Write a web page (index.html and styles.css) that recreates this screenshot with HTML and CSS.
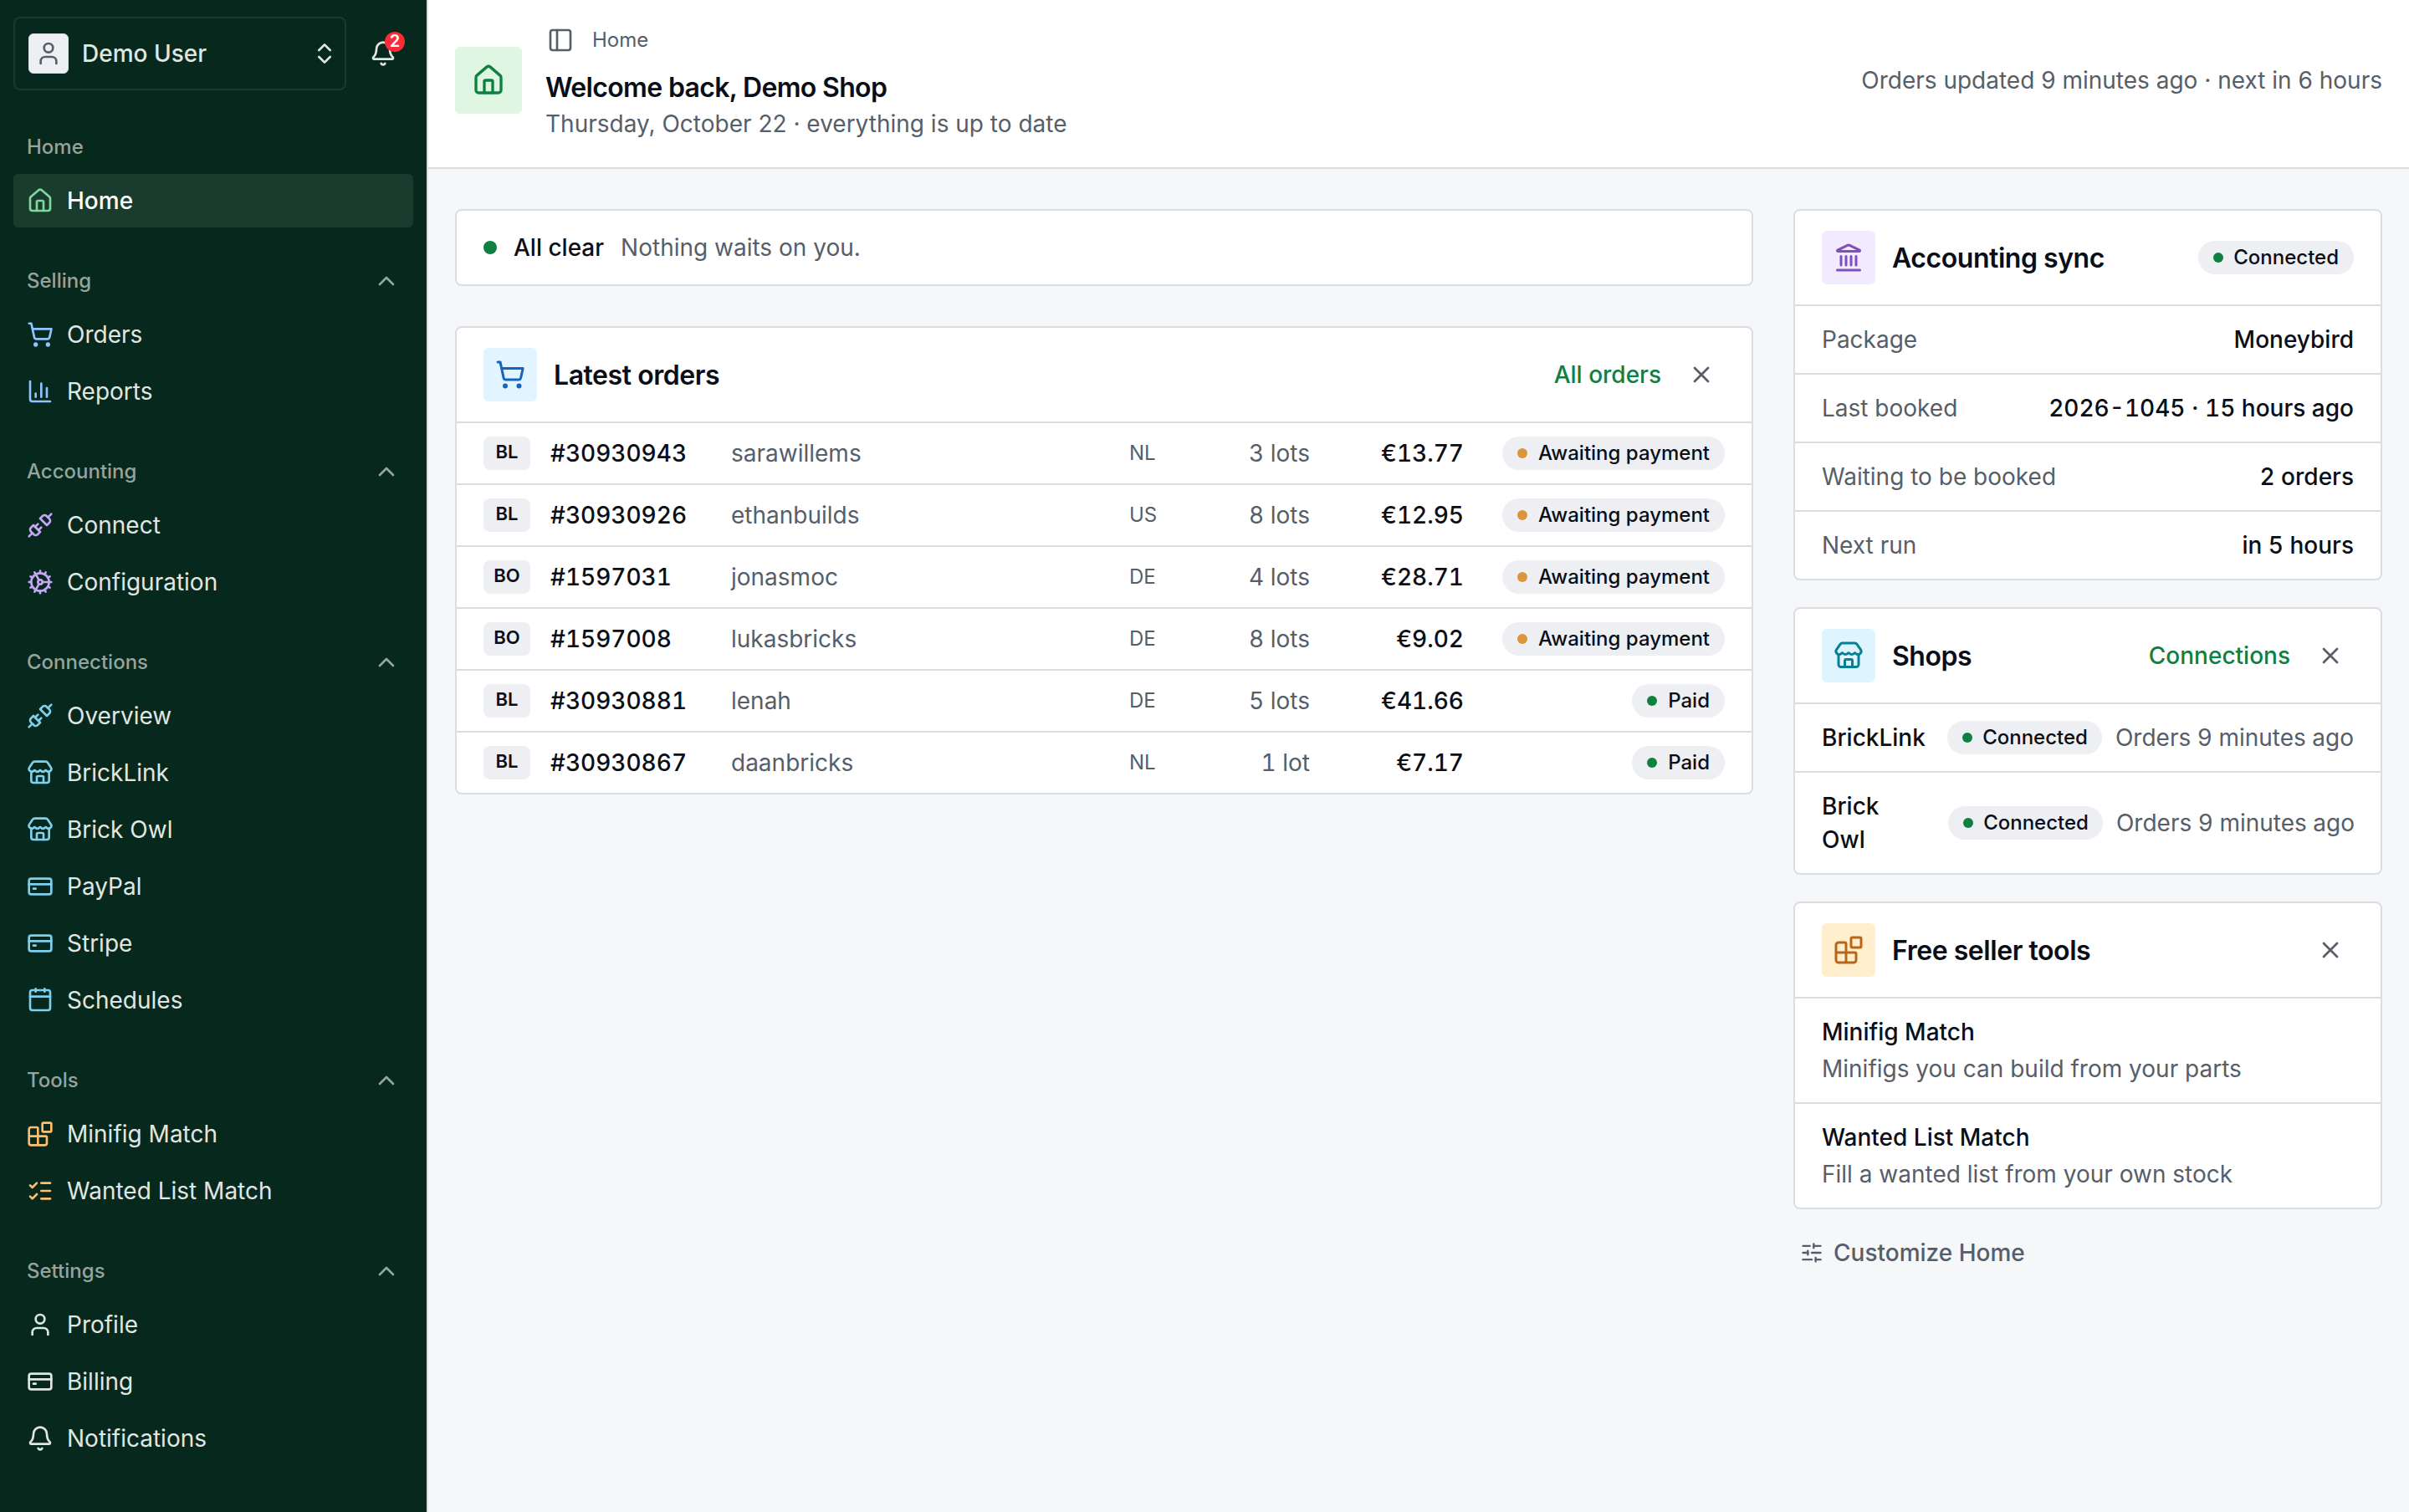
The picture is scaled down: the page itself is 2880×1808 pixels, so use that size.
FILE: index.html
```html
<!DOCTYPE html>
<html lang="en">
<head>
<meta charset="utf-8">
<title>Home</title>
<link rel="stylesheet" href="styles.css">
</head>
<body>
<svg class="sprite" aria-hidden="true">
  <symbol id="i-user" viewBox="0 0 24 24"><path d="M19 21v-2a4 4 0 0 0-4-4H9a4 4 0 0 0-4 4v2"/><circle cx="12" cy="7" r="4"/></symbol>
  <symbol id="i-updown" viewBox="0 0 24 24"><path d="m7 15 5 5 5-5"/><path d="m7 9 5-5 5 5"/></symbol>
  <symbol id="i-bell" viewBox="0 0 24 24"><path d="M10.268 21a2 2 0 0 0 3.464 0"/><path d="M3.262 15.326A1 1 0 0 0 4 17h16a1 1 0 0 0 .74-1.673C19.41 13.956 18 12.499 18 8A6 6 0 0 0 6 8c0 4.499-1.411 5.956-2.738 7.326"/></symbol>
  <symbol id="i-home" viewBox="0 0 24 24"><path d="M15 21v-8a1 1 0 0 0-1-1h-4a1 1 0 0 0-1 1v8"/><path d="M3 10a2 2 0 0 1 .709-1.528l7-5.999a2 2 0 0 1 2.582 0l7 5.999A2 2 0 0 1 21 10v9a2 2 0 0 1-2 2H5a2 2 0 0 1-2-2z"/></symbol>
  <symbol id="i-up" viewBox="0 0 24 24"><path d="m18 15-6-6-6 6"/></symbol>
  <symbol id="i-cart" viewBox="0 0 24 24"><circle cx="8" cy="21" r="1"/><circle cx="19" cy="21" r="1"/><path d="M2.05 2.05h2l2.66 12.42a2 2 0 0 0 2 1.58h9.78a2 2 0 0 0 1.95-1.57l1.65-7.43H5.12"/></symbol>
  <symbol id="i-chart" viewBox="0 0 24 24"><path d="M3 3v16a2 2 0 0 0 2 2h16"/><path d="M18 17V9"/><path d="M13 17V5"/><path d="M8 17v-3"/></symbol>
  <symbol id="i-unplug" viewBox="0 0 24 24"><path d="m19 5 3-3"/><path d="m2 22 3-3"/><path d="M6.3 20.3a2.4 2.4 0 0 0 3.4 0L12 18l-6-6-2.3 2.3a2.4 2.4 0 0 0 0 3.4Z"/><path d="M7.5 13.5 10 11"/><path d="M10.5 16.5 13 14"/><path d="m12 6 6 6 2.3-2.3a2.4 2.4 0 0 0 0-3.4l-2.6-2.6a2.4 2.4 0 0 0-3.4 0Z"/></symbol>
  <symbol id="i-cog" viewBox="0 0 24 24"><path d="M12 20a8 8 0 1 0 0-16 8 8 0 0 0 0 16Z"/><path d="M12 14a2 2 0 1 0 0-4 2 2 0 0 0 0 4Z"/><path d="M12 2v2"/><path d="M12 22v-2"/><path d="m17 20.66-1-1.73"/><path d="M11 10.27 7 3.34"/><path d="m20.66 17-1.73-1"/><path d="m3.34 7 1.73 1"/><path d="M14 12h8"/><path d="M2 12h2"/><path d="m20.66 7-1.73 1"/><path d="m3.34 17 1.73-1"/><path d="m17 3.34-1 1.73"/><path d="m11 13.73-4 6.93"/></symbol>
  <symbol id="i-store" viewBox="0 0 24 24"><path d="M15 21v-5a1 1 0 0 0-1-1h-4a1 1 0 0 0-1 1v5"/><path d="M17.774 10.31a1.12 1.12 0 0 0-1.549 0 2.5 2.5 0 0 1-3.451 0 1.12 1.12 0 0 0-1.548 0 2.5 2.5 0 0 1-3.452 0 1.12 1.12 0 0 0-1.549 0 2.5 2.5 0 0 1-3.77-3.248l2.889-4.184A2 2 0 0 1 7 2h10a2 2 0 0 1 1.653.873l2.895 4.192a2.5 2.5 0 0 1-3.774 3.244"/><path d="M4 10.95V19a2 2 0 0 0 2 2h12a2 2 0 0 0 2-2v-8.05"/></symbol>
  <symbol id="i-card" viewBox="0 0 24 24"><rect x="2" y="5" width="20" height="14" rx="2"/><path d="M2 10h20"/><path d="M6 14h2"/></symbol>
  <symbol id="i-calendar" viewBox="0 0 24 24"><rect x="3" y="3" width="18" height="18" rx="2"/><path d="M3 8.7h18"/><path d="M8 1.8v2.6"/><path d="M16 1.8v2.6"/></symbol>
  <symbol id="i-blocks" viewBox="0 0 24 24"><path d="M10 22V7a1 1 0 0 0-1-1H4a2 2 0 0 0-2 2v12a2 2 0 0 0 2 2h12a2 2 0 0 0 2-2v-5a1 1 0 0 0-1-1H2"/><rect x="14" y="2" width="8" height="8" rx="1"/></symbol>
  <symbol id="i-checks" viewBox="0 0 24 24"><path d="M13 5h8"/><path d="M13 12h8"/><path d="M13 19h8"/><path d="m3 17 2 2 4-4"/><path d="m3 7 2 2 4-4"/></symbol>
  <symbol id="i-panel" viewBox="0 0 24 24"><rect x="3" y="3" width="18" height="18" rx="2"/><path d="M9 3v18"/></symbol>
  <symbol id="i-x" viewBox="0 0 24 24"><path d="M18 6 6 18"/><path d="m6 6 12 12"/></symbol>
  <symbol id="i-bank" viewBox="0 0 24 24"><path d="M10 18v-7"/><path d="M11.12 2.198a2 2 0 0 1 1.76.006l7.866 3.847c.476.233.31.949-.22.949H3.474c-.53 0-.695-.716-.22-.949z"/><path d="M14 18v-7"/><path d="M18 18v-7"/><path d="M3 22h18"/><path d="M6 18v-7"/></symbol>
  <symbol id="i-sliders" viewBox="0 0 24 24"><path d="M10 5H3"/><path d="M12 19H3"/><path d="M14 3v4"/><path d="M16 17v4"/><path d="M21 12h-9"/><path d="M21 19h-5"/><path d="M21 5h-7"/><path d="M8 10v4"/><path d="M8 12H3"/></symbol>
</svg>
<div class="app">
  <aside class="sidebar">
    <div class="account-row">
      <div class="account">
        <span class="avatar"><svg class="icon"><use href="#i-user"/></svg></span>
        <span class="account-name">Demo User</span>
        <svg class="icon updown"><use href="#i-updown"/></svg>
      </div>
      <div class="bell"><svg class="icon"><use href="#i-bell"/></svg><span class="count">2</span></div>
    </div>
    <nav class="nav">
      <section class="group">
        <h2 class="group-title">Home</h2>
        <a class="item active green"><svg class="icon"><use href="#i-home"/></svg>Home</a>
      </section>
      <section class="group">
        <h2 class="group-title">Selling<svg class="icon"><use href="#i-up"/></svg></h2>
        <a class="item blue"><svg class="icon"><use href="#i-cart"/></svg>Orders</a>
        <a class="item blue"><svg class="icon"><use href="#i-chart"/></svg>Reports</a>
      </section>
      <section class="group">
        <h2 class="group-title">Accounting<svg class="icon"><use href="#i-up"/></svg></h2>
        <a class="item purple"><svg class="icon"><use href="#i-unplug"/></svg>Connect</a>
        <a class="item purple"><svg class="icon"><use href="#i-cog"/></svg>Configuration</a>
      </section>
      <section class="group">
        <h2 class="group-title">Connections<svg class="icon"><use href="#i-up"/></svg></h2>
        <a class="item cyan"><svg class="icon"><use href="#i-unplug"/></svg>Overview</a>
        <a class="item cyan"><svg class="icon"><use href="#i-store"/></svg>BrickLink</a>
        <a class="item cyan"><svg class="icon"><use href="#i-store"/></svg>Brick Owl</a>
        <a class="item cyan"><svg class="icon"><use href="#i-card"/></svg>PayPal</a>
        <a class="item cyan"><svg class="icon"><use href="#i-card"/></svg>Stripe</a>
        <a class="item cyan"><svg class="icon"><use href="#i-calendar"/></svg>Schedules</a>
      </section>
      <section class="group">
        <h2 class="group-title">Tools<svg class="icon"><use href="#i-up"/></svg></h2>
        <a class="item orange"><svg class="icon"><use href="#i-blocks"/></svg>Minifig Match</a>
        <a class="item orange"><svg class="icon"><use href="#i-checks"/></svg>Wanted List Match</a>
      </section>
      <section class="group">
        <h2 class="group-title">Settings<svg class="icon"><use href="#i-up"/></svg></h2>
        <a class="item"><svg class="icon"><use href="#i-user"/></svg>Profile</a>
        <a class="item"><svg class="icon"><use href="#i-card"/></svg>Billing</a>
        <a class="item"><svg class="icon"><use href="#i-bell"/></svg>Notifications</a>
      </section>
    </nav>
  </aside>
  <div class="page">
    <header class="header">
      <span class="tile tile-home"><svg class="icon"><use href="#i-home"/></svg></span>
      <div class="heading">
        <div class="crumb"><svg class="icon"><use href="#i-panel"/></svg>Home</div>
        <h1 class="title">Welcome back, Demo Shop</h1>
        <p class="subtitle">Thursday, October 22 · everything is up to date</p>
      </div>
      <p class="updated">Orders updated 9 minutes ago · next in 6 hours</p>
    </header>
    <main class="content">
      <div class="main-col">
        <div class="card clear"><span class="dot big"></span><strong class="strong">All clear</strong><span>Nothing waits on you.</span></div>
        <section class="card">
          <div class="card-head">
            <span class="tile tile-blue"><svg class="icon"><use href="#i-cart"/></svg></span>
            <h2 class="card-title">Latest orders</h2>
            <a class="link">All orders</a>
            <svg class="icon close"><use href="#i-x"/></svg>
          </div>
          <div class="order"><span class="tag">BL</span><span class="num">#30930943</span><span class="buyer">sarawillems</span><span class="country">NL</span><span class="lots">3 lots</span><span class="price">€13.77</span><span class="status"><span class="pill"><i class="dot amber"></i>Awaiting payment</span></span></div>
          <div class="order"><span class="tag">BL</span><span class="num">#30930926</span><span class="buyer">ethanbuilds</span><span class="country">US</span><span class="lots">8 lots</span><span class="price">€12.95</span><span class="status"><span class="pill"><i class="dot amber"></i>Awaiting payment</span></span></div>
          <div class="order"><span class="tag">BO</span><span class="num">#1597031</span><span class="buyer">jonasmoc</span><span class="country">DE</span><span class="lots">4 lots</span><span class="price">€28.71</span><span class="status"><span class="pill"><i class="dot amber"></i>Awaiting payment</span></span></div>
          <div class="order"><span class="tag">BO</span><span class="num">#1597008</span><span class="buyer">lukasbricks</span><span class="country">DE</span><span class="lots">8 lots</span><span class="price">€9.02</span><span class="status"><span class="pill"><i class="dot amber"></i>Awaiting payment</span></span></div>
          <div class="order"><span class="tag">BL</span><span class="num">#30930881</span><span class="buyer">lenah</span><span class="country">DE</span><span class="lots">5 lots</span><span class="price">€41.66</span><span class="status"><span class="pill"><i class="dot"></i>Paid</span></span></div>
          <div class="order"><span class="tag">BL</span><span class="num">#30930867</span><span class="buyer">daanbricks</span><span class="country">NL</span><span class="lots">1 lot</span><span class="price">€7.17</span><span class="status"><span class="pill"><i class="dot"></i>Paid</span></span></div>
        </section>
      </div>
      <div class="side-col">
        <section class="card">
          <div class="card-head">
            <span class="tile tile-purple"><svg class="icon"><use href="#i-bank"/></svg></span>
            <h2 class="card-title">Accounting sync</h2>
            <span class="pill"><i class="dot"></i>Connected</span>
          </div>
          <div class="fact"><span>Package</span><span class="strong">Moneybird</span></div>
          <div class="fact"><span>Last booked</span><span class="strong tabular">2026-1045 · 15 hours ago</span></div>
          <div class="fact"><span>Waiting to be booked</span><span class="strong tabular">2 orders</span></div>
          <div class="fact"><span>Next run</span><span class="strong tabular">in 5 hours</span></div>
        </section>
        <section class="card">
          <div class="card-head">
            <span class="tile tile-cyan"><svg class="icon"><use href="#i-store"/></svg></span>
            <h2 class="card-title">Shops</h2>
            <a class="link">Connections</a>
            <svg class="icon close"><use href="#i-x"/></svg>
          </div>
          <div class="fact shop"><span class="strong shop-name">BrickLink</span><span class="pill"><i class="dot"></i>Connected</span><span class="ago">Orders 9 minutes ago</span></div>
          <div class="fact shop"><span class="strong shop-name">Brick<br>Owl</span><span class="pill"><i class="dot"></i>Connected</span><span class="ago ago-tight">Orders 9 minutes ago</span></div>
        </section>
        <section class="card">
          <div class="card-head">
            <span class="tile tile-amber"><svg class="icon"><use href="#i-blocks"/></svg></span>
            <h2 class="card-title">Free seller tools</h2>
            <svg class="icon close"><use href="#i-x"/></svg>
          </div>
          <div class="tool"><span class="strong">Minifig Match</span><span>Minifigs you can build from your parts</span></div>
          <div class="tool"><span class="strong">Wanted List Match</span><span>Fill a wanted list from your own stock</span></div>
        </section>
        <a class="customize"><svg class="icon"><use href="#i-sliders"/></svg>Customize Home</a>
      </div>
    </main>
  </div>
</div>
</body>
</html>
```
FILE: styles.css
```css
* { box-sizing: border-box; margin: 0; padding: 0; }
body {
  font-family: Inter, "Liberation Sans", sans-serif;
  font-size: 28px;
  line-height: 40px;
  color: #565e69;
  background: #f5f7f9;
}
.sprite { display: none; }
.icon {
  width: 32px;
  height: 32px;
  flex: none;
  fill: none;
  stroke: currentColor;
  stroke-width: 2;
  stroke-linecap: round;
  stroke-linejoin: round;
}
.app { display: flex; height: 1808px; overflow: hidden; }

/* Sidebar */
.sidebar {
  width: 512px;
  flex: none;
  background: #07281d;
  border-right: 2px solid #dadde2;
  color: #e0e7e3;
}
.account-row { display: flex; align-items: center; padding: 20px 16px 0; }
.account {
  display: flex;
  align-items: center;
  width: 398px;
  height: 88px;
  padding: 0 8px 0 16px;
  border: 2px solid #193c2e;
  border-radius: 8px;
  font-weight: 500;
}
.avatar {
  display: grid;
  place-items: center;
  width: 48px;
  height: 48px;
  margin-right: 16px;
  background: #eeeff3;
  border: 1px solid #dadde2;
  border-radius: 6px;
  color: #565e69;
}
.account-name { flex: 1; }
.bell { position: relative; display: flex; margin-left: 28px; }
.count {
  position: absolute;
  left: 18px;
  top: -10px;
  width: 24px;
  height: 24px;
  border-radius: 50%;
  background: #fb2c36;
  color: #fff;
  font-size: 20px;
  font-weight: 600;
  line-height: 23px;
  text-align: center;
}
.nav { display: flex; flex-direction: column; gap: 32px; padding: 36px 16px 0; }
.group { display: flex; flex-direction: column; gap: 4px; }
.group-title {
  display: flex;
  align-items: center;
  justify-content: space-between;
  height: 64px;
  margin-bottom: -4px;
  padding: 0 16px;
  font-size: 24px;
  font-weight: 500;
  color: #95a49d;
}
.item {
  display: flex;
  align-items: center;
  gap: 16px;
  height: 64px;
  padding: 0 16px;
  border-radius: 6px;
}
.item.active { background: #193c2e; color: #fff; font-weight: 500; }
.green .icon { color: #7fd99a; }
.blue .icon { color: #8ec5ff; }
.purple .icon { color: #c4a7f5; }
.cyan .icon { color: #7dd0ee; }
.orange .icon { color: #ffbe6f; }

/* Header */
.page { flex: 1; min-width: 0; }
.header {
  display: flex;
  align-items: center;
  height: 202px;
  padding: 0 32px 8px;
  background: #fff;
  border-bottom: 2px solid #dadde2;
}
.tile {
  display: grid;
  place-items: center;
  flex: none;
  width: 64px;
  height: 64px;
  border-radius: 6px;
}
.tile .icon { width: 36px; height: 36px; }
.tile-blue { background: #e2f4ff; color: #1565c0; }
.tile-purple { background: #f2eafe; color: #7e4fbd; }
.tile-cyan { background: #dff5fe; color: #067f94; }
.tile-amber { background: #ffefcd; color: #b9661a; }
.tile-home { width: 80px; height: 80px; background: #dff7e2; color: #0e8040; }
.tile-home .icon { width: 40px; height: 40px; }
.heading { flex: 1; margin: 4px 0 0 28px; }
.crumb { display: flex; align-items: center; gap: 22px; height: 40px; padding-left: 2px; font-size: 24px; }
.title { margin-top: 15px; font-size: 32px; line-height: 44px; font-weight: 600; letter-spacing: -0.67px; color: #0a0e17; }
.subtitle { margin-top: 1px; }

/* Content */
.content { display: flex; gap: 48px; padding: 48px 32px 0; }
.main-col { flex: 1; display: flex; flex-direction: column; gap: 48px; }
.side-col { width: 704px; flex: none; display: flex; flex-direction: column; gap: 32px; }
.card { background: #fff; border: 2px solid #dadde2; border-radius: 8px; }
.strong { font-weight: 500; color: #0a0e17; }
.clear { display: flex; align-items: center; gap: 20px; height: 92px; padding: 0 32px; }
.dot { flex: none; width: 12px; height: 12px; border-radius: 50%; background: #0e8040; }
.dot.big { width: 16px; height: 16px; }
.dot.amber { background: #db953a; }
.card-head { display: flex; align-items: center; height: 112px; padding: 0 32px; }
.card-title { flex: 1; margin-left: 20px; padding-top: 2px; font-size: 32px; font-weight: 600; letter-spacing: -0.45px; color: #0a0e17; }
.link { font-weight: 500; color: #0e8040; }
.close { margin: 0 12px 0 32px; }
.pill {
  display: inline-flex;
  align-items: center;
  flex: none;
  gap: 12px;
  height: 40px;
  padding: 0 18px;
  border-radius: 20px;
  background: #eeeff3;
  color: #0a0e17;
  font-size: 24px;
  font-weight: 500;
  white-space: nowrap;
}
.order .pill { gap: 13px; }
.order {
  display: flex;
  align-items: center;
  height: 74px;
  padding: 0 32px;
  border-top: 2px solid #dadde2;
  font-variant-numeric: tabular-nums;
}
.tag {
  width: 56px;
  height: 40px;
  margin-right: 24px;
  border-radius: 8px;
  background: #eeeff3;
  color: #0a0e17;
  font-size: 22px;
  font-weight: 600;
  line-height: 37px;
  text-align: center;
}
.num { width: 216px; font-weight: 500; color: #0a0e17; }
.buyer { flex: 1; }
.country { width: 80px; font-size: 24px; }
.lots { width: 136px; text-align: right; }
.price { width: 184px; text-align: right; font-weight: 500; color: #0a0e17; }
.status { width: 312px; display: flex; justify-content: flex-end; }
.fact {
  display: flex;
  align-items: center;
  justify-content: space-between;
  min-height: 82px;
  padding: 0 32px;
  border-top: 2px solid #dadde2;
}
.tabular { font-variant-numeric: tabular-nums; }
.shop { padding: 20px 32px; }
.shop .pill { padding: 0 17px 0 18px; }
.shop-name { flex: 1; }
.ago { margin-left: 16px; white-space: nowrap; font-variant-numeric: tabular-nums; }
.ago-tight { margin-right: -1px; }
.tool { display: flex; flex-direction: column; gap: 4px; padding: 20px 32px; border-top: 2px solid #dadde2; }
.customize { display: flex; align-items: center; gap: 12px; padding-left: 8px; font-weight: 500; }
.customize .icon { width: 28px; height: 28px; }
```
